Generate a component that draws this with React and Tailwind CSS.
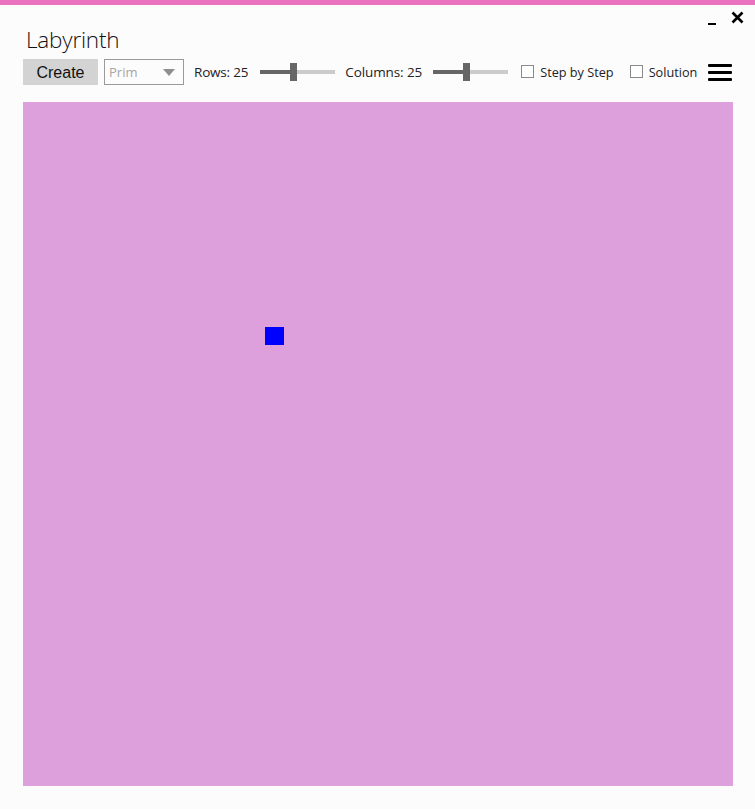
import React from "react";

function Slider() {
  return (
    <div className="relative flex h-[18px] w-[75px] items-center">
      <div className="h-[4px] w-[30px] bg-[#666666]" />
      <div className="h-[18px] w-[7px] bg-[#666666]" />
      <div className="h-[4px] flex-1 bg-[#cccccc]" />
    </div>
  );
}

function Check({ label }) {
  return (
    <div className="flex items-center gap-[6px]">
      <div className="h-[13px] w-[13px] border border-[#8a8a8a] bg-white" />
      <span className="pt-[1px] text-[12.7px] text-[#222]">{label}</span>
    </div>
  );
}

export default function App() {
  return (
    <div
      className="flex h-[809px] w-[755px] flex-col bg-[#fdfcfd]"
      style={{ fontFamily: '"Open Sans", "Noto Sans", sans-serif' }}
    >
      <div className="h-[5px] bg-[#e971bd]" />
      <div className="relative h-[54px]">
        <div className="absolute left-[26px] top-[20px] text-[22.5px] font-light leading-[30px] tracking-[-0.2px] text-[#111]">
          Labyrinth
        </div>
        <div className="absolute right-[11px] top-[6px] flex items-start gap-[15px]">
          <div className="mt-[12px] h-[2px] w-[8px] bg-black" />
          <svg width="13" height="13" viewBox="0 0 13 13">
            <path d="M1.5 1.5 L11.5 11.5 M11.5 1.5 L1.5 11.5" stroke="#000" strokeWidth="2.6" />
          </svg>
        </div>
      </div>
      <div className="flex h-[26px] items-center pl-[23px]">
        <button
          className="h-[26px] w-[75px] bg-[#d3d3d3] pt-[2px] text-[16px] text-[#111]"
          style={{ fontFamily: '"Liberation Sans", Arial, sans-serif' }}
        >
          Create
        </button>
        <div className="ml-[6px] flex h-[26px] w-[80px] items-center justify-between border border-[#9a9a9a] pl-[4px] pr-[8px]">
          <span className="pt-[2px] text-[13px] text-[#a6a6a6]">Prim</span>
          <svg width="12" height="7" viewBox="0 0 12 7">
            <path d="M0 0 L12 0 L6 7 Z" fill="#8f8f8f" />
          </svg>
        </div>
        <span className="ml-[10px] pt-[1px] text-[13.5px] tracking-[-0.2px] text-[#222]">Rows: 25</span>
        <div className="ml-[12px]">
          <Slider />
        </div>
        <span className="ml-[10px] pt-[1px] text-[13.5px] tracking-[-0.1px] text-[#222]">Columns: 25</span>
        <div className="ml-[11px]">
          <Slider />
        </div>
        <div className="ml-[13px]">
          <Check label="Step by Step" />
        </div>
        <div className="ml-[16px]">
          <Check label="Solution" />
        </div>
        <div className="ml-[11px] flex flex-col gap-[4px]">
          <div className="h-[3px] w-[24px] rounded-[1px] bg-black" />
          <div className="h-[3px] w-[24px] rounded-[1px] bg-black" />
          <div className="h-[3px] w-[24px] rounded-[1px] bg-black" />
        </div>
      </div>
      <div className="relative ml-[23px] mt-[17px] h-[684px] w-[710px] bg-[#dda0dd]">
        <div className="absolute left-[242px] top-[225px] h-[18px] w-[19px] bg-[#0000ff]" />
      </div>
    </div>
  );
}
